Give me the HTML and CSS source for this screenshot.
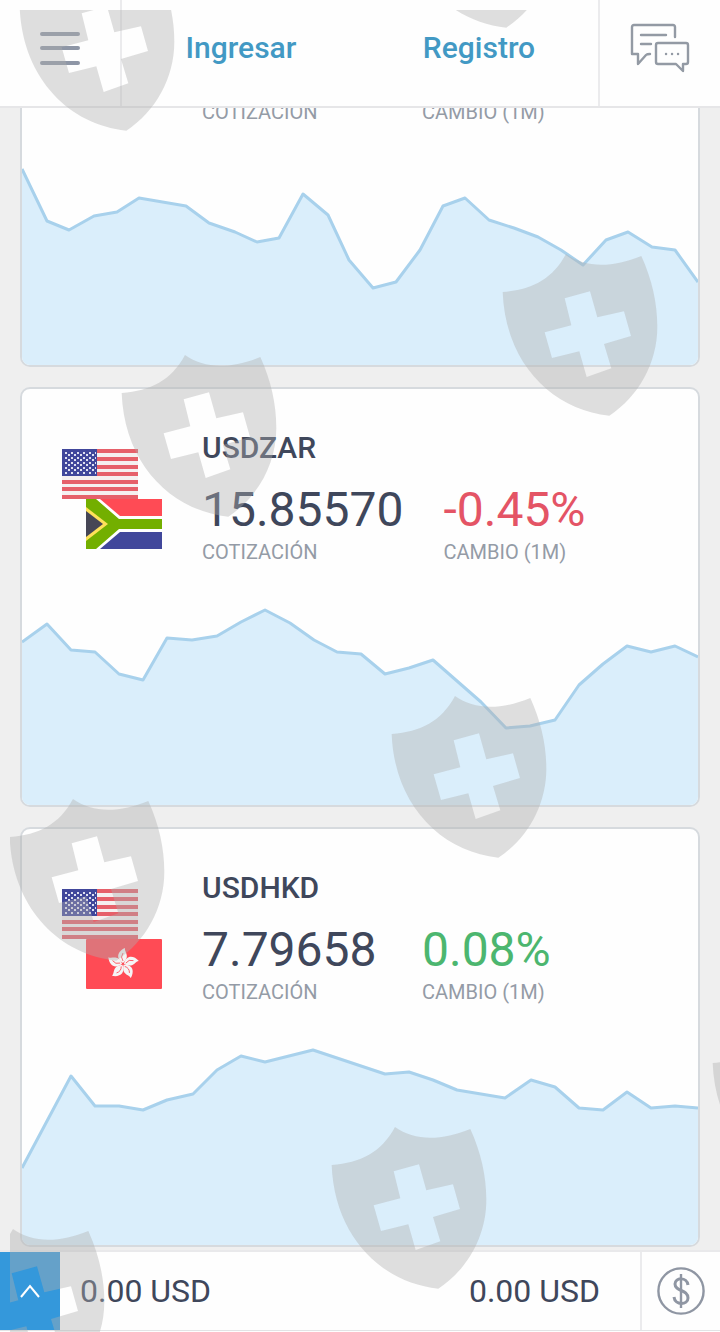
FILE: index.html
```html
<!DOCTYPE html>
<html lang="es">
<head>
    <meta charset="UTF-8">
    <meta name="viewport" content="width=device-width, initial-scale=1">
    <title>USD</title>
    <link rel="stylesheet" href="styles.css">
</head>
<body>
<header class="topbar">
    <button class="menu-btn" type="button">
        <svg width="40" height="34" viewBox="0 0 40 34" fill="none" stroke="#8e96a6" stroke-width="4" stroke-linecap="round">
            <path d="M2 3H38M2 17H38M2 32H38"/>
        </svg>
    </button>
    <nav class="account-nav">
        <a href="#">Ingresar</a>
        <a href="#">Registro</a>
    </nav>
    <button class="chat-btn" type="button">
        <svg width="60" height="50" viewBox="0 0 60 50" fill="none" stroke="#939aa4" stroke-width="2.4" stroke-linejoin="round" stroke-linecap="round">
            <path d="M45 14V4Q45 2 43 2H4Q2 2 2 4V31H8V41L16 32Q17 31 20 31"/>
            <path d="M11 12H36M11 21H21"/>
            <path d="M28 20H56Q58 20 58 22V39Q58 41 56 41H53V48L46 41H28Q26 41 26 39V22Q26 20 28 20Z"/>
            <path d="M36 31H36.1M42 31H42.1M48 31H48.1"/>
        </svg>
    </button>
</header>

<main class="pairs">
    <section class="pair">
        <div class="pair-head">
            <div class="flags"></div>
            <div class="pair-info">
                <h2></h2>
                <dl class="stats">
                    <div><dd></dd><dt>COTIZACIÓN</dt></div>
                    <div><dd></dd><dt>CAMBIO (1M)</dt></div>
                </dl>
            </div>
        </div>
        <svg class="chart" viewBox="0 0 676 216" preserveAspectRatio="none">
            <path class="area" d="M0 20L25 72L47 81L72 67L95 63L117 49L164 57L187 74L213 83L235 93L257 89L281 45L306 66L327 111L351 139L374 133L398 101L421 57L443 49L467 71L492 79L516 88L539 101L561 116L584 91L606 83L630 98L653 101L676 133V216H0Z"/>
            <path class="line" d="M0 20L25 72L47 81L72 67L95 63L117 49L164 57L187 74L213 83L235 93L257 89L281 45L306 66L327 111L351 139L374 133L398 101L421 57L443 49L467 71L492 79L516 88L539 101L561 116L584 91L606 83L630 98L653 101L676 133"/>
        </svg>
    </section>

    <section class="pair">
        <div class="pair-head">
            <div class="flags">
                <svg class="flag" viewBox="0 0 76 50"><use href="#flag-us"/></svg>
                <svg class="flag flag-quote" viewBox="0 0 76 50">
                    <rect width="76" height="50" rx="1" fill="#fff"/>
                    <path d="M14 0H76V17H34Z" fill="#ff4b55"/>
                    <path d="M14 50H76V33H34Z" fill="#41479b"/>
                    <path d="M0 0H10L33 20H76V30H33L10 50H0V41L20 25L0 9Z" fill="#73af00"/>
                    <path d="M0 8L22 25L0 42Z" fill="#ffe15a"/>
                    <path d="M0 12L17 25L0 38Z" fill="#464655"/>
                </svg>
            </div>
            <div class="pair-info">
                <h2>USDZAR</h2>
                <dl class="stats">
                    <div><dd>15.85570</dd><dt>COTIZACIÓN</dt></div>
                    <div><dd class="down">-0.45%</dd><dt>CAMBIO (1M)</dt></div>
                </dl>
            </div>
        </div>
        <svg class="chart" viewBox="0 0 676 216" preserveAspectRatio="none">
            <path class="area" d="M0 53L25 35L49 61L73 63L97 85L121 91L145 49L170 51L195 47L219 33L243 21L268 34L292 51L315 63L339 65L363 85L387 79L411 71L459 113L484 139L508 137L533 131L557 96L581 75L605 57L629 63L653 57L676 68V216H0Z"/>
            <path class="line" d="M0 53L25 35L49 61L73 63L97 85L121 91L145 49L170 51L195 47L219 33L243 21L268 34L292 51L315 63L339 65L363 85L387 79L411 71L459 113L484 139L508 137L533 131L557 96L581 75L605 57L629 63L653 57L676 68"/>
        </svg>
    </section>

    <section class="pair">
        <div class="pair-head">
            <div class="flags">
                <svg class="flag" viewBox="0 0 76 50"><use href="#flag-us"/></svg>
                <svg class="flag flag-quote" viewBox="0 0 76 50">
                    <defs>
                        <g id="petal">
                            <path d="M0 -1C-8 -6 -5 -13 2 -16C1 -12 8 -8 0 -1Z" fill="#f5f5f5"/>
                            <path d="M0 -3Q-3 -7 0 -11" fill="none" stroke="#ff4b55" stroke-width="0.8"/>
                        </g>
                    </defs>
                    <rect width="76" height="50" rx="1" fill="#ff4b55"/>
                    <g transform="translate(37 25)">
                        <use href="#petal"/>
                        <use href="#petal" transform="rotate(72)"/>
                        <use href="#petal" transform="rotate(144)"/>
                        <use href="#petal" transform="rotate(216)"/>
                        <use href="#petal" transform="rotate(288)"/>
                    </g>
                </svg>
            </div>
            <div class="pair-info">
                <h2>USDHKD</h2>
                <dl class="stats">
                    <div><dd>7.79658</dd><dt>COTIZACIÓN</dt></div>
                    <div><dd class="up">0.08%</dd><dt>CAMBIO (1M)</dt></div>
                </dl>
            </div>
        </div>
        <svg class="chart" viewBox="0 0 676 216" preserveAspectRatio="none">
            <path class="area" d="M0 139L49 47L73 77L97 77L121 81L145 71L171 65L195 41L219 27L243 33L291 21L363 45L387 43L411 51L435 61L483 69L509 51L533 58L557 79L581 81L605 63L629 79L653 77L676 79V216H0Z"/>
            <path class="line" d="M0 139L49 47L73 77L97 77L121 81L145 71L171 65L195 41L219 27L243 33L291 21L363 45L387 43L411 51L435 61L483 69L509 51L533 58L557 79L581 81L605 63L629 79L653 77L676 79"/>
        </svg>
    </section>
</main>

<footer class="balance">
    <button class="expand-btn" type="button">
        <svg width="20" height="14" viewBox="0 0 20 14" fill="none" stroke="#fff" stroke-width="2">
            <path d="M1 13L10 2L19 13"/>
        </svg>
    </button>
    <span>0.00 USD</span>
    <span class="total">0.00 USD</span>
    <button class="money-btn" type="button">
        <svg width="48" height="48" viewBox="0 0 48 48" fill="none" stroke="#8f96a3" stroke-width="2.4">
            <circle cx="24" cy="24" r="22.6"/>
            <path d="M24 7V41"/>
            <path d="M31 18C30 10 18 10 18 17C18 25 31 22 31 31C31 38 18 39 17 30" stroke-width="3"/>
        </svg>
    </button>
</footer>

<!-- escudos -->
<svg class="shields" width="720" height="1332" viewBox="0 0 720 1332">
    <defs>
        <path id="shield" transform="scale(0.3333)" fill-rule="evenodd" d="M2 117C90 110 150 80 192 3C250 45 330 45 418 9C450 80 466 150 466 221C466 330 410 430 322 488C150 470 10 330 2 117ZM188 136L264 115L286 193L366 175L387 249L306 273L328 346L254 372L232 295L150 315L128 238L208 217Z"/>
        <clipPath id="frame"><rect x="10" y="10" width="710" height="1322"/></clipPath>
        <g id="flag-us">
            <rect width="76" height="50" fill="#f5f0f0"/>
            <path d="M0 2H76M0 10H76M0 18H76M0 25H76M0 33H76M0 40H76M0 48H76" stroke="#e6606a" stroke-width="4"/>
            <rect width="35" height="27" fill="#41479b"/>
            <path d="M3 4H34M3 9H34M3 14H34M3 19H34M3 24H34" stroke="#dfe0f0" stroke-width="2" stroke-dasharray="2 4"/>
            <path d="M6 6H32M6 11H32M6 16H32M6 21H32" stroke="#dfe0f0" stroke-width="2" stroke-dasharray="2 4"/>
        </g>
    </defs>
    <g clip-path="url(#frame)">
        <use href="#shield" x="19" y="-32"/>
        <use href="#shield" x="399" y="-135"/>
        <use href="#shield" x="502" y="253"/>
        <use href="#shield" x="121" y="354"/>
        <use href="#shield" x="391" y="695"/>
        <use href="#shield" x="9" y="798"/>
        <use href="#shield" x="712" y="1024"/>
        <use href="#shield" x="331" y="1126"/>
        <use href="#shield" x="-51" y="1228"/>
    </g>
</svg>
</body>
</html>
```
FILE: styles.css
```css
* {
    box-sizing: border-box;
}

body {
    margin: 0;
    height: 100vh;
    display: flex;
    flex-direction: column;
    background: #fefefe;
    color: #3f475b;
    font-family: Roboto, "Liberation Sans", sans-serif;
    overflow: hidden;
}

button {
    display: flex;
    align-items: center;
    justify-content: center;
    padding: 0;
    border: 0;
    background: none;
    cursor: pointer;
}

.topbar {
    display: flex;
    flex: none;
    height: 108px;
    border-bottom: 2px solid #e6e6e8;
}

.menu-btn,
.chat-btn {
    width: 122px;
    padding-bottom: 10px;
}

.menu-btn {
    border-right: 2px solid #ebebed;
}

.chat-btn {
    border-left: 2px solid #ebebed;
}

.account-nav {
    flex: 1;
    display: flex;
}

.account-nav a {
    flex: 1;
    padding-bottom: 12px;
    display: flex;
    align-items: center;
    justify-content: center;
    color: #4299c4;
    font-size: 30px;
    font-weight: 500;
    text-decoration: none;
}

.pairs {
    flex: 1;
    min-height: 0;
    display: flex;
    flex-direction: column;
    justify-content: flex-end;
    gap: 20px;
    padding: 0 20px 3px;
    background: #efefef;
    overflow: hidden;
}

.pair {
    flex: none;
    border: 2px solid #d6dade;
    border-radius: 10px;
    background: #fefefe;
    overflow: hidden;
}

.pair-head {
    display: flex;
    gap: 40px;
    height: 200px;
    padding: 39px 40px 0;
}

.flags {
    width: 100px;
    margin-top: 21px;
}

.flag {
    display: block;
    width: 76px;
    height: 50px;
}

.flag-quote {
    margin-left: 24px;
}

h2 {
    margin: 0 0 12px;
    min-height: 40px;
    font-size: 30px;
    font-weight: 500;
    line-height: 40px;
}

.stats {
    display: flex;
    gap: 40px;
    margin: 0;
}

.stats div {
    min-width: 180px;
}

dd {
    margin: 0;
    min-height: 60px;
    font-size: 48px;
    line-height: 60px;
}

dt {
    color: #949ba6;
    font-size: 20px;
    line-height: 24px;
}

.down {
    color: #e45465;
}

.up {
    color: #4cb66f;
}

.chart {
    display: block;
    width: 100%;
    height: 216px;
}

.area {
    fill: #daeefb;
}

.line {
    fill: none;
    stroke: #a8d1ec;
    stroke-width: 3;
    stroke-linejoin: round;
}

.balance {
    display: flex;
    flex: none;
    align-items: center;
    height: 81px;
    margin-bottom: 1px;
    border-top: 2px solid #e9e9eb;
    border-bottom: 1px solid #e2e3e5;
    font-size: 32px;
    line-height: 40px;
}

.balance button {
    align-self: stretch;
}

.expand-btn {
    width: 60px;
    margin-right: 20px;
    background: #3498db;
}

.total {
    margin-left: auto;
    margin-right: 40px;
}

.money-btn {
    width: 80px;
    border-left: 2px solid #ebebed;
}

.shields {
    position: absolute;
    top: 0;
    left: 0;
    fill: rgba(175, 175, 175, 0.4);
    pointer-events: none;
}
```
